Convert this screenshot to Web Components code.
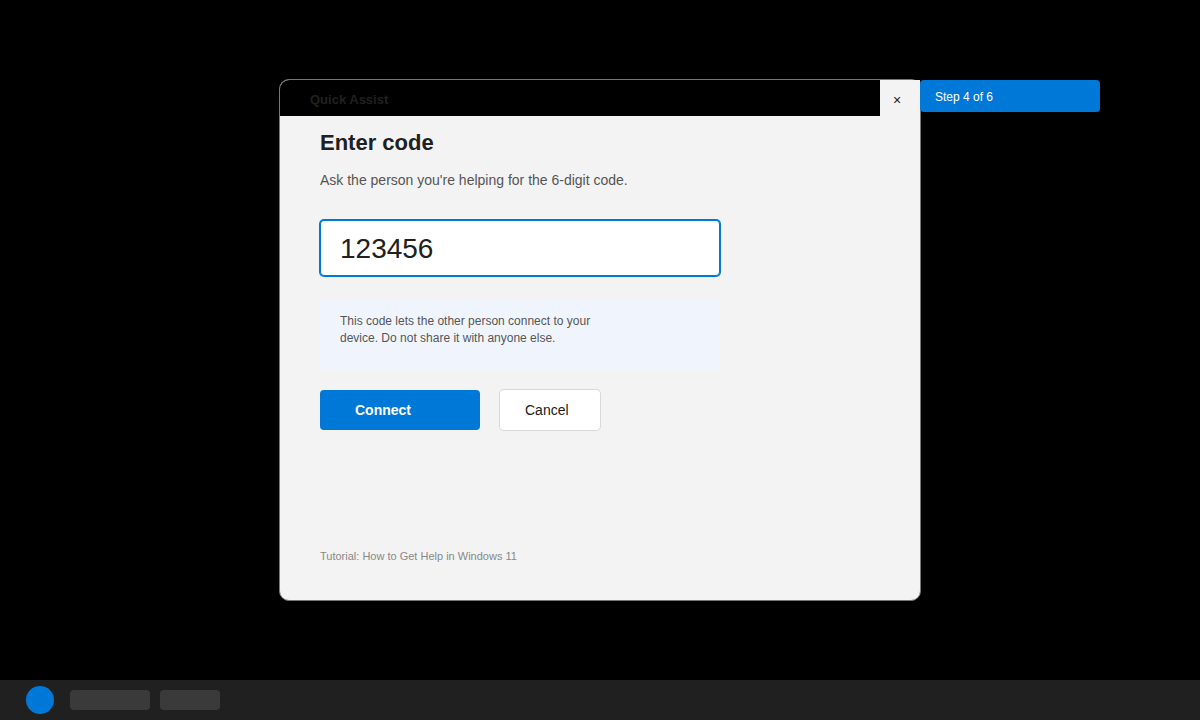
<!DOCTYPE html>
<html lang="en">
<head>
<meta charset="utf-8">
<meta name="viewport" content="width=device-width, initial-scale=1">
<title>Quick Assist</title>
<style>
  body {
    margin: 0;
    background: #000;
    color: #202020;
    font-family: "Liberation Sans", Arial, Helvetica, sans-serif;
    font-size: 14px;
    line-height: 20px;
  }
</style>
</head>
<body>
<qa-desktop>
  <qa-window heading="Quick Assist">
    <qa-step slot="badge" current="4" total="6"></qa-step>
    <qa-code-form value="123456">
      <span slot="title">Enter code</span>
      <span slot="hint">Ask the person you're helping for the 6-digit code.</span>
      <qa-notice slot="notice">This code lets the other person connect to your device. Do not share it with anyone else.</qa-notice>
      <qa-button slot="actions" variant="primary">Connect</qa-button>
      <qa-button slot="actions">Cancel</qa-button>
    </qa-code-form>
    <span slot="footer">Tutorial: How to Get Help in Windows 11</span>
  </qa-window>
  <qa-taskbar slot="taskbar"></qa-taskbar>
</qa-desktop>

<script>
class QaDesktop extends HTMLElement {
  constructor() {
    super();
    this.attachShadow({ mode: 'open' });
    this.shadowRoot.innerHTML = `
      <style>
        :host {
          display: flex;
          flex-direction: column;
          min-height: 100vh;
        }
        main {
          flex: 1;
          display: flex;
          justify-content: center;
          align-items: flex-start;
          padding: 79px 16px;
        }
      </style>
      <main><slot></slot></main>
      <slot name="taskbar"></slot>
    `;
  }
}

class QaWindow extends HTMLElement {
  constructor() {
    super();
    this.attachShadow({ mode: 'open' });
    this.shadowRoot.innerHTML = `
      <style>
        :host {
          position: relative;
          display: flex;
          flex-direction: column;
          flex: 0 1 640px;
          min-height: 520px;
          border: 1px solid #787878;
          border-radius: 10px;
          background: #f3f3f3;
        }
        header {
          display: flex;
          height: 36px;
        }
        .title {
          flex: 1;
          padding: 0 30px;
          border-top-left-radius: 9px;
          background: #000;
          font-size: 13px;
          font-weight: bold;
          line-height: 40px;
        }
        button {
          width: 40px;
          padding: 4px 6px 0 0;
          border: 0;
          background: #f3f3f3;
          color: inherit;
          font: inherit;
        }
        section {
          flex: 1;
          padding: 14px 40px 0;
        }
        footer {
          padding: 0 40px 36px;
          color: #888;
          font-size: 11px;
          line-height: 16px;
        }
        /* hangs off the right edge of the window */
        slot[name="badge"]::slotted(*) {
          position: absolute;
          top: 0;
          left: 100%;
        }
      </style>
      <header>
        <div class="title"></div>
        <button type="button" aria-label="Close">×</button>
      </header>
      <section><slot></slot></section>
      <footer><slot name="footer"></slot></footer>
      <slot name="badge"></slot>
    `;
  }

  connectedCallback() {
    this.shadowRoot.querySelector('.title').textContent = this.getAttribute('heading') || '';
  }
}

class QaStep extends HTMLElement {
  constructor() {
    super();
    this.attachShadow({ mode: 'open' });
  }

  connectedCallback() {
    this.shadowRoot.innerHTML = `
      <style>
        :host {
          box-sizing: border-box;
          width: 180px;
          height: 32px;
          padding: 0 15px;
          border-radius: 4px;
          background: #0078d7;
          color: #fff;
          font-size: 12px;
          line-height: 34px;
        }
      </style>
      <span>Step ${this.getAttribute('current')} of ${this.getAttribute('total')}</span>
    `;
  }
}

class QaCodeForm extends HTMLElement {
  constructor() {
    super();
    this.attachShadow({ mode: 'open' });
    this.shadowRoot.innerHTML = `
      <style>
        :host {
          display: block;
          max-width: 400px;
        }
        h1 {
          margin: 0 0 14px;
          font-size: 22px;
          line-height: 26px;
        }
        p {
          margin: 0 0 30px;
          color: #555;
        }
        input {
          box-sizing: border-box;
          display: block;
          width: 100%;
          height: 56px;
          margin: 0 0 24px;
          padding: 1px 19px 0;
          border: 1px solid #0078d7;
          border-radius: 4px;
          box-shadow: 0 0 0 1px #0078d7;
          outline: none;
          background: #fff;
          color: inherit;
          font: inherit;
          font-size: 28px;
        }
        .actions {
          display: flex;
          gap: 20px;
          margin-top: 20px;
        }
      </style>
      <form>
        <h1><label for="code"><slot name="title"></slot></label></h1>
        <p><slot name="hint"></slot></p>
        <input id="code" type="text" inputmode="numeric" maxlength="6" autocomplete="off">
        <slot name="notice"></slot>
        <div class="actions"><slot name="actions"></slot></div>
      </form>
    `;
  }

  connectedCallback() {
    this.shadowRoot.querySelector('input').value = this.getAttribute('value') || '';
  }
}

class QaNotice extends HTMLElement {
  constructor() {
    super();
    this.attachShadow({ mode: 'open' });
    this.shadowRoot.innerHTML = `
      <style>
        :host {
          box-sizing: border-box;
          display: block;
          min-height: 70px;
          padding: 13px 20px;
          border-radius: 4px;
          background: #f0f5fd;
          color: #555;
          font-size: 12px;
          line-height: 17px;
        }
        p {
          max-width: 270px;
          margin: 0;
        }
      </style>
      <p><slot></slot></p>
    `;
  }
}

class QaButton extends HTMLElement {
  constructor() {
    super();
    this.attachShadow({ mode: 'open' });
    this.shadowRoot.innerHTML = `
      <style>
        :host {
          display: block;
          width: 100px;
        }
        :host([variant="primary"]) {
          width: 160px;
        }
        button {
          width: 100%;
          height: 40px;
          padding: 0 25px;
          border: 0;
          border-radius: 4px;
          box-shadow: 0 0 0 1px #d8d8d8;
          background: #fff;
          color: inherit;
          font: inherit;
          text-align: left;
        }
        :host([variant="primary"]) button {
          padding: 0 35px;
          box-shadow: none;
          background: #0078d7;
          color: #fff;
          font-weight: bold;
        }
      </style>
      <button type="button"><slot></slot></button>
    `;
  }
}

class QaTaskbar extends HTMLElement {
  constructor() {
    super();
    this.attachShadow({ mode: 'open' });
    this.shadowRoot.innerHTML = `
      <style>
        :host {
          display: flex;
          align-items: center;
          gap: 10px;
          height: 40px;
          padding: 0 26px;
          background: #202020;
        }
        button {
          height: 20px;
          padding: 0;
          border: 0;
          border-radius: 4px;
          background: #3a3a3a;
        }
        .start {
          width: 28px;
          height: 28px;
          margin-right: 6px;
          border-radius: 50%;
          background: #0078d7;
        }
        .wide { width: 80px; }
        .narrow { width: 60px; }
      </style>
      <button type="button" class="start" aria-label="Start"></button>
      <button type="button" class="wide" aria-label="Search"></button>
      <button type="button" class="narrow" aria-label="Apps"></button>
    `;
  }
}

customElements.define('qa-desktop', QaDesktop);
customElements.define('qa-window', QaWindow);
customElements.define('qa-step', QaStep);
customElements.define('qa-code-form', QaCodeForm);
customElements.define('qa-notice', QaNotice);
customElements.define('qa-button', QaButton);
customElements.define('qa-taskbar', QaTaskbar);
</script>
</body>
</html>
